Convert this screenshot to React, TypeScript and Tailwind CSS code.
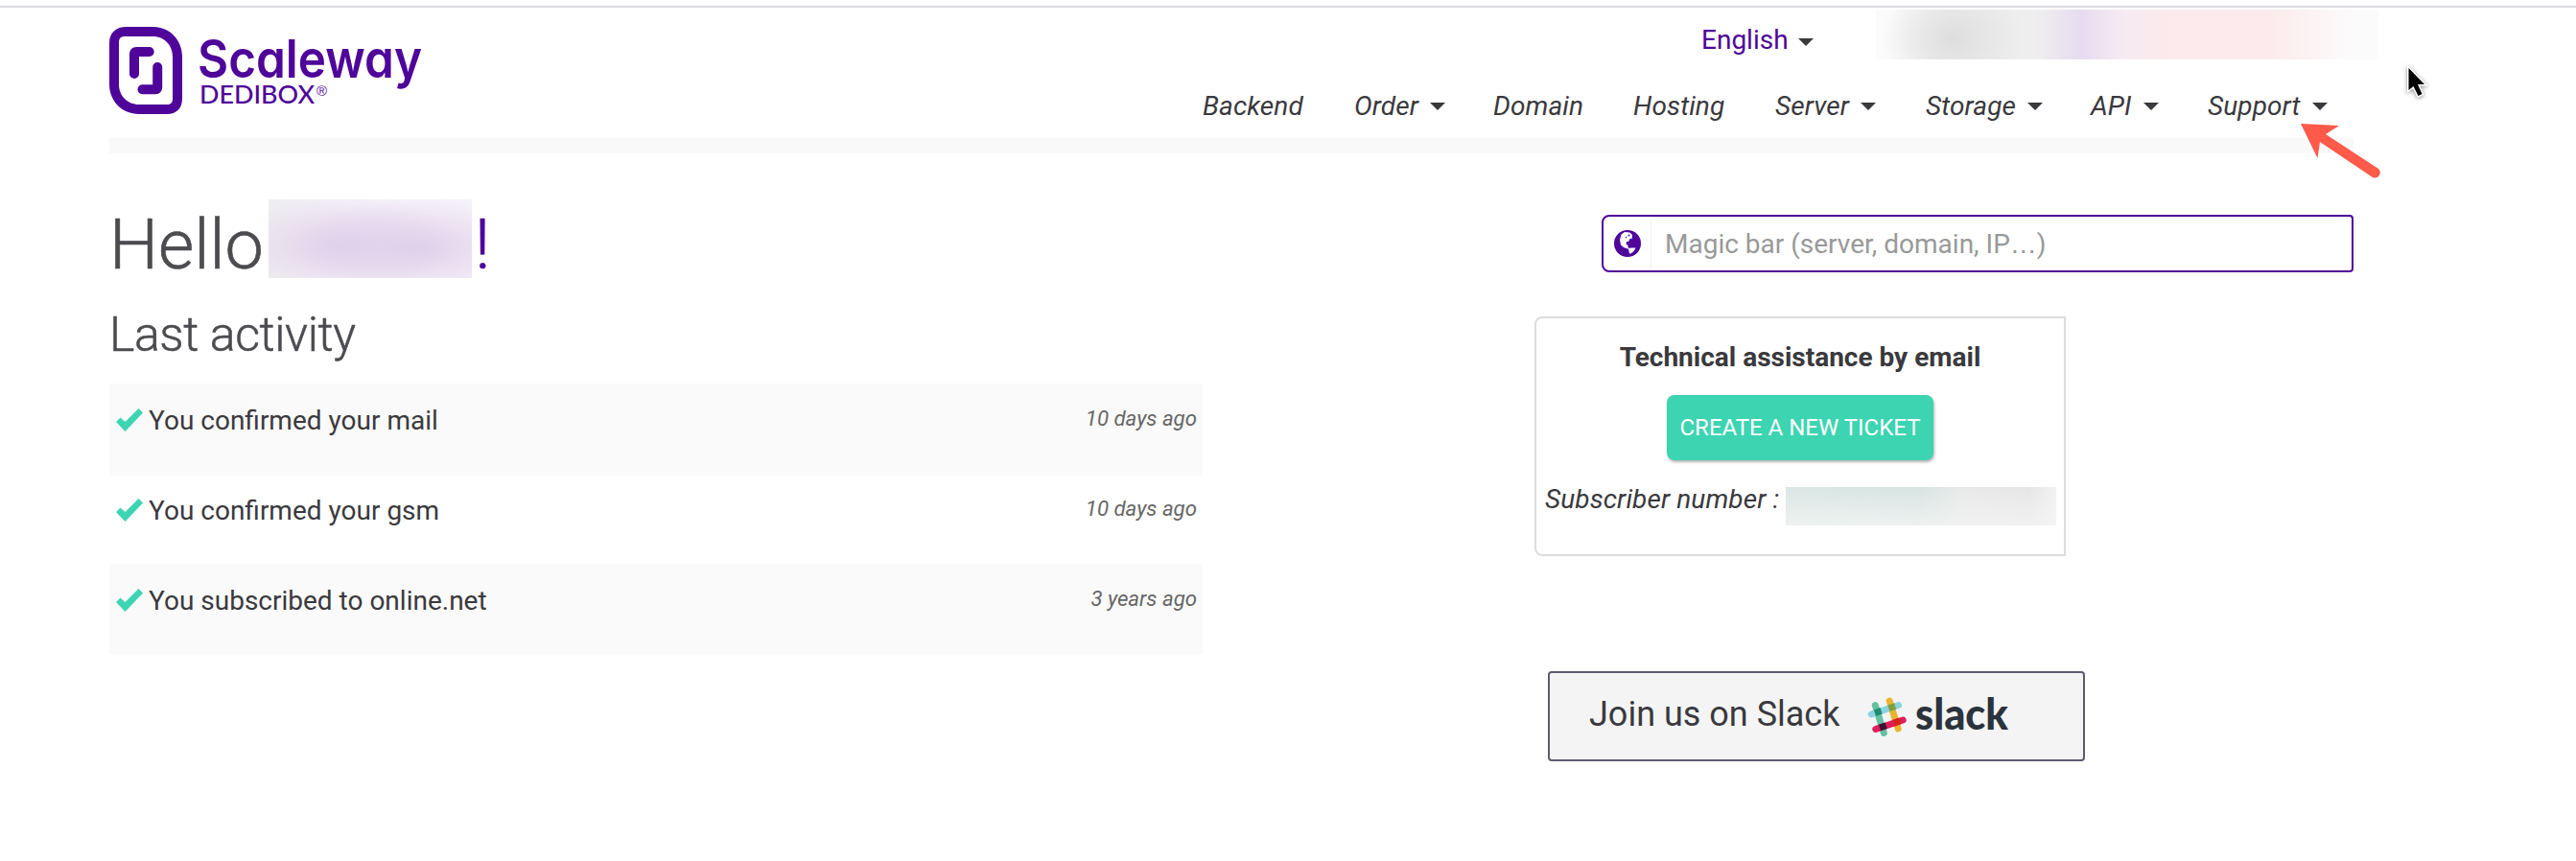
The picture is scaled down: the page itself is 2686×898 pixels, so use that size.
import React from "react";

function Caret({ className = "" }: { className?: string }) {
  return (
    <svg viewBox="0 0 16 8" className={`h-2 w-4 shrink-0 fill-[#3a393d] ${className}`}>
      <path d="M0 0H16L8 8Z" />
    </svg>
  );
}

function Logo() {
  return (
    <svg viewBox="0 0 360 120" className="mt-2 h-[120px] w-[360px] fill-[#4f0599]">
      <path
        fillRule="evenodd"
        d="M18 12H46C63 12 76 26 76 43V87C76 97 70 103 60 103H31C13 103 0 89 0 72V29C0 18 7 12 18 12ZM16 22C12 22 10 24 10 28V72C10 84 19 93 31 93H60C64 93 66 91 66 87V43C66 31 57 22 46 22Z"
      />
      <path
        d="M26 61V40Q26 38 28 38H41.700M50.200 54V75.300Q50.200 77.300 48.200 77.300H34.500"
        className="fill-none stroke-[#4f0599]"
        strokeWidth="10"
        strokeLinecap="round"
        strokeLinejoin="round"
      />
      <text
        x="92"
        y="64.500"
        textLength="234"
        lengthAdjust="spacingAndGlyphs"
        className="font-['Inter'] text-[55px] font-semibold [font-feature-settings:'cv11','ss03']"
      >
        Scaleway
      </text>
      <text x="94" y="92" textLength="120" lengthAdjust="spacingAndGlyphs" className="font-['Lato'] text-[27px] font-medium">
        DEDIBOX
      </text>
      <text x="216" y="84" textLength="11" lengthAdjust="spacingAndGlyphs" className="font-['Liberation_Sans'] text-[15px]">
        ®
      </text>
    </svg>
  );
}

function Globe() {
  return (
    <svg viewBox="0 0 28 28" className="size-7">
      <circle cx="14" cy="14" r="14" className="fill-[#4f0599]" />
      <path
        d="M7.500 4.500L11 2L16.500 2.500L19 5L18.500 9.500L17 8.500L16 10L15 12L13 12L12.500 14.500L14.500 16V18L16.500 19.500L14 19.500L10 18L7 15.500L6 10Z M15 19.500L17 18.500H22.500L21 21.500L17.500 24.500H16Z"
        className="fill-white"
      />
      <circle cx="15.500" cy="5.500" r="1" className="fill-[#4f0599]" />
      <circle cx="12.500" cy="7.500" r="0.800" className="fill-[#4f0599]" />
    </svg>
  );
}

function Slack() {
  return (
    <svg viewBox="0 0 150 52" className="ml-[30px] h-[52px] w-[150px]">
      <g strokeWidth="7" strokeLinecap="round" fill="none">
        <path d="M8.300 14.500L17.300 43.500" stroke="#63c1a0" />
        <path d="M23.200 10L32.200 39" stroke="#ecb32d" />
        <path d="M4.200 24L32.500 14.500" stroke="#8bd4e0" />
        <path d="M8.800 39.500L37.200 30" stroke="#e31c5b" />
      </g>
      <path d="M6.800 19.400l6.700-2.300 2.200 6.600-6.700 2.300z" fill="#218c74" />
      <path d="M21.300 14.500l6.700-2.300 2.200 6.600-6.700 2.300z" fill="#829d3c" />
      <path d="M11.900 34.700l6.700-2.300 2.200 6.600-6.700 2.300z" fill="#391433" />
      <path d="M26.600 29.800l6.700-2.300 2.200 6.600-6.700 2.300z" fill="#d6241e" />
      <text x="50" y="39.500" textLength="97" lengthAdjust="spacingAndGlyphs" className="fill-[#2b333c] font-['Lato'] text-[45px] font-black">
        slack
      </text>
    </svg>
  );
}

function Check() {
  return (
    <svg viewBox="0 0 28 24" className="ml-[7px] h-6 w-7 shrink-0 fill-[#3dd4b2]">
      <path d="M0 14L4.500 9.500L9.500 14L23.500 0L28 4.500L9.500 24Z" />
    </svg>
  );
}

const nav = [
  { label: "Backend", menu: false, width: "w-[158px]" },
  { label: "Order", menu: true, width: "w-[145px]" },
  { label: "Domain", menu: false, width: "w-[146px]" },
  { label: "Hosting", menu: false, width: "w-[148px]" },
  { label: "Server", menu: true, width: "w-[157px]" },
  { label: "Storage", menu: true, width: "w-[172px]" },
  { label: "API", menu: true, width: "w-[122px]" },
  { label: "Support", menu: true, width: "w-[151px]" },
];

const activity = [
  { text: "You confirmed your mail", when: "10 days ago", row: "h-24 bg-[#fafafa] pt-[22px]" },
  { text: "You confirmed your gsm", when: "10 days ago", row: "h-[92px] pt-5" },
  { text: "You subscribed to online.net", when: "3 years ago", row: "h-[94px] bg-[#fafafa] pt-[22px]" },
];

export default function App() {
  return (
    <div className="relative h-[898px] w-[2686px] overflow-hidden bg-white pt-1.5 font-['Roboto',sans-serif] text-[28px] leading-8 text-[#3a393d]">
      <div className="h-0.5 bg-[#dcdde2]" />
      <header className="ml-[114px] flex h-[136px] w-[2372px] justify-between">
        <Logo />
        <div className="w-[1232px]">
          <div className="flex h-[87px]">
            <div className="mt-[18px] ml-[520px] flex h-8 w-[182px] items-center text-[#4f0599]">
              <span>English</span>
              <Caret className="mt-1 ml-2.5" />
            </div>
            <div className="mt-0.5 h-[52px] w-[524px] bg-[#fbfbfb] bg-[radial-gradient(ellipse_75px_60px_at_80px_30px,#dedede,transparent),linear-gradient(90deg,transparent_3%,#efefef_16%,#eeeeee_32%,#e6dcf1_41%,#f6eaf1_49%,#fceaec_58%,#fceaec_78%,transparent_94%)]" />
          </div>
          <nav className="flex italic">
            {nav.map((n) => (
              <a key={n.label} className={`flex items-center gap-3 ${n.width}`}>
                <span className="tracking-[0.1px]">{n.label}</span>
                {n.menu && <Caret />}
              </a>
            ))}
          </nav>
        </div>
      </header>
      <div className="ml-[114px] h-4 w-[2340px] bg-[#f9f9f9]" />

      <main className="ml-[114px] flex w-[2340px]">
        <section className="w-[1140px] shrink-0">
          <h1 className="mt-12 flex h-[82px] text-[72px] leading-[95px] font-light text-[#4c4b50] [-webkit-text-stroke:0.6px]">
            <span className="w-[166px]">Hello</span>
            <span className="h-[82px] w-[212px] bg-[#f5f2f9] bg-[radial-gradient(ellipse_120px_52px_at_75px_48px,#e0d0ea,transparent),radial-gradient(ellipse_130px_52px_at_155px_50px,#e0d0ea,transparent),linear-gradient(90deg,#eeeef0,transparent_40%)]" />
            <span className="pl-[3px] text-[#4f0599]">!</span>
          </h1>
          <h2 className="mt-[31px] h-[79px] text-[50px] leading-[56px] font-light tracking-[-0.4px] text-[#4c4b50] [-webkit-text-stroke:0.5px]">
            Last activity
          </h2>
          <ul>
            {activity.map((a) => (
              <li key={a.text} className={`flex justify-between pr-[6px] ${a.row}`}>
                <span className="flex h-8 items-center">
                  <Check />
                  <span className="ml-[6px] pt-0.5">{a.text}</span>
                </span>
                <span className="text-[22.200px] leading-7 text-[#666] italic">{a.when}</span>
              </li>
            ))}
          </ul>
        </section>

        <aside className="ml-[346px] pt-16">
          <div className="ml-[70px] flex h-[60px] w-[784px] items-center rounded-[4px] rounded-l-lg border-2 border-[#4f0599]">
            <span className="flex h-full w-[49px] items-center pl-[11px]">
              <Globe />
            </span>
            <span className="h-full grow border-l border-[#f4f4f4] pl-[14px] leading-[58px] text-[#999] shadow-[inset_0_2px_2px_rgba(0,0,0,0.05)]">
              Magic bar (server, domain, IP<span className="font-['Liberation_Sans']">…</span>)
            </span>
          </div>
          <div className="mt-[46px] flex h-[250px] w-[554px] flex-col items-center rounded-l-lg border-2 border-[#ddd] pt-[25px]">
            <strong className="font-bold">Technical assistance by email</strong>
            <button className="mt-[23px] h-[68px] w-[278px] rounded-lg bg-[#3dd4b2] text-2xl text-white shadow-[1px_2px_3px_rgba(0,0,0,0.3)]">
              CREATE A NEW TICKET
            </button>
            <div className="mt-6 flex w-full pl-[9px]">
              <em className="w-[251px] pt-px tracking-[0.1px] whitespace-nowrap">Subscriber number :</em>
              <span className="mt-1 h-10 w-[282px] bg-[linear-gradient(180deg,transparent,#f4f4f4cc),linear-gradient(90deg,#dae7e4,#d6e4e1_50%,#e9e9e9_65%,#e6e6e6_90%,#f2f2f2)]" />
            </div>
          </div>
          <div className="mt-[120px] ml-[14px] flex h-[94px] w-[560px] items-center rounded-[4px] border-2 border-[#5e5b6e] bg-[#f4f4f4] pl-[41px]">
            <span className="w-[260px] pb-1 text-[36px] whitespace-nowrap">Join us on Slack</span>
            <Slack />
          </div>
        </aside>
      </main>

      <svg viewBox="0 0 180 150" className="absolute top-[50px] left-[2380px] h-[150px] w-[180px]">
        <path d="M19 79L59 81L45 90L100 126A5.500 5.500 0 0 1 94 135L39 98L36.500 115Z" fill="#ff5a4a" />
        <path
          d="M131.500 21V44L136.500 40L141.500 50L145.500 48L141 38H148Z"
          className="fill-black stroke-white drop-shadow-[0_1px_2px_rgba(0,0,0,0.45)]"
          strokeWidth="3"
          paintOrder="stroke"
        />
      </svg>
    </div>
  );
}
